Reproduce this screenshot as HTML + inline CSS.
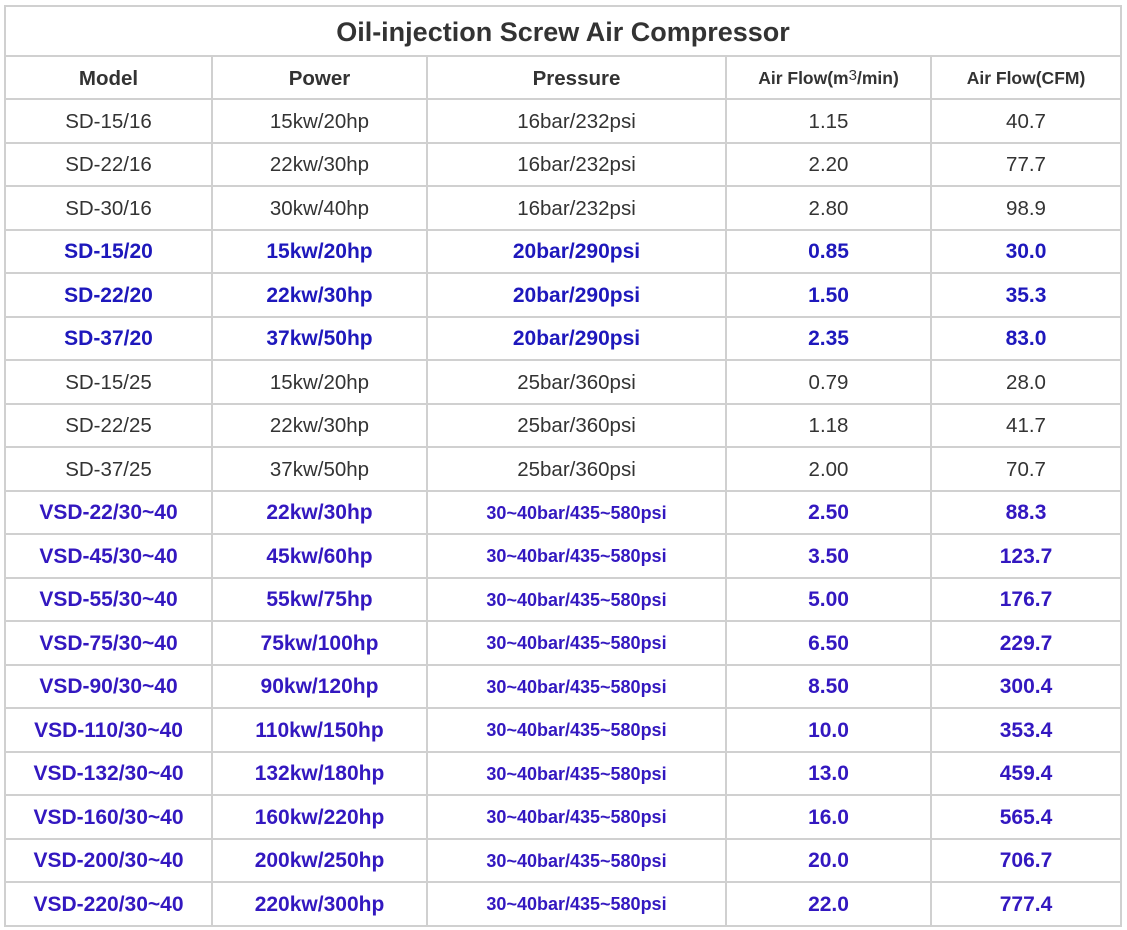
<!DOCTYPE html>
<html><head><meta charset="utf-8"><style>
body{margin:0;background:#fff;width:1127px;height:930px;position:relative;font-family:"Liberation Sans",Arial,sans-serif;color:#333;}
.c{position:absolute;display:flex;align-items:center;justify-content:center;box-sizing:border-box;border-right:2px solid #d0d0d0;border-bottom:2px solid #d0d0d0;font-size:20.5px;padding-top:2px;}
.b{font-weight:bold;color:#1e18bc;font-size:21px;}
.v{font-weight:bold;color:#3318c0;font-size:21px;}
.h{font-weight:bold;font-size:20.5px;color:#333;}
sup{font-size:15px;line-height:0;position:relative;top:-3px;vertical-align:super;font-weight:normal;}
</style></head><body>
<div id="t"></div>
<script>
const rows=[
["SD-15/16","15kw/20hp","16bar/232psi","1.15","40.7",""],
["SD-22/16","22kw/30hp","16bar/232psi","2.20","77.7",""],
["SD-30/16","30kw/40hp","16bar/232psi","2.80","98.9",""],
["SD-15/20","15kw/20hp","20bar/290psi","0.85","30.0","b"],
["SD-22/20","22kw/30hp","20bar/290psi","1.50","35.3","b"],
["SD-37/20","37kw/50hp","20bar/290psi","2.35","83.0","b"],
["SD-15/25","15kw/20hp","25bar/360psi","0.79","28.0",""],
["SD-22/25","22kw/30hp","25bar/360psi","1.18","41.7",""],
["SD-37/25","37kw/50hp","25bar/360psi","2.00","70.7",""],
["VSD-22/30~40","22kw/30hp","30~40bar/435~580psi","2.50","88.3","v"],
["VSD-45/30~40","45kw/60hp","30~40bar/435~580psi","3.50","123.7","v"],
["VSD-55/30~40","55kw/75hp","30~40bar/435~580psi","5.00","176.7","v"],
["VSD-75/30~40","75kw/100hp","30~40bar/435~580psi","6.50","229.7","v"],
["VSD-90/30~40","90kw/120hp","30~40bar/435~580psi","8.50","300.4","v"],
["VSD-110/30~40","110kw/150hp","30~40bar/435~580psi","10.0","353.4","v"],
["VSD-132/30~40","132kw/180hp","30~40bar/435~580psi","13.0","459.4","v"],
["VSD-160/30~40","160kw/220hp","30~40bar/435~580psi","16.0","565.4","v"],
["VSD-200/30~40","200kw/250hp","30~40bar/435~580psi","20.0","706.7","v"],
["VSD-220/30~40","220kw/300hp","30~40bar/435~580psi","22.0","777.4","v"]];
const xs=[4,213,428,727,932,1122];
let h='<div class="c" style="left:4px;top:5px;width:1118px;height:52px;border-left:2px solid #d0d0d0;border-top:2px solid #d0d0d0;font-weight:bold;font-size:27px;color:#333">Oil-injection Screw Air Compressor</div>';
const hd=["Model","Power","Pressure","Air Flow(m<sup>3</sup>/min)","Air Flow(CFM)"];
function cell(i,y,hh,txt,cls,st){h+=`<div class="c ${cls}" style="left:${xs[i]}px;top:${y}px;width:${xs[i+1]-xs[i]}px;height:${hh}px;${i==0?'border-left:2px solid #d0d0d0;':''}${st||''}">${txt}</div>`;}
for(let i=0;i<5;i++)cell(i,57,43,hd[i],"h",i>=3?"font-size:17.5px;":"");
for(let r=0;r<rows.length;r++){const y=100+r*43.5;const R=rows[r];
for(let i=0;i<5;i++)cell(i,y,43.5,R[i],R[5],(R[5]=="v"&&i==2)?"font-size:18px;":"");}
document.getElementById('t').innerHTML=h;
</script>
</body></html>
